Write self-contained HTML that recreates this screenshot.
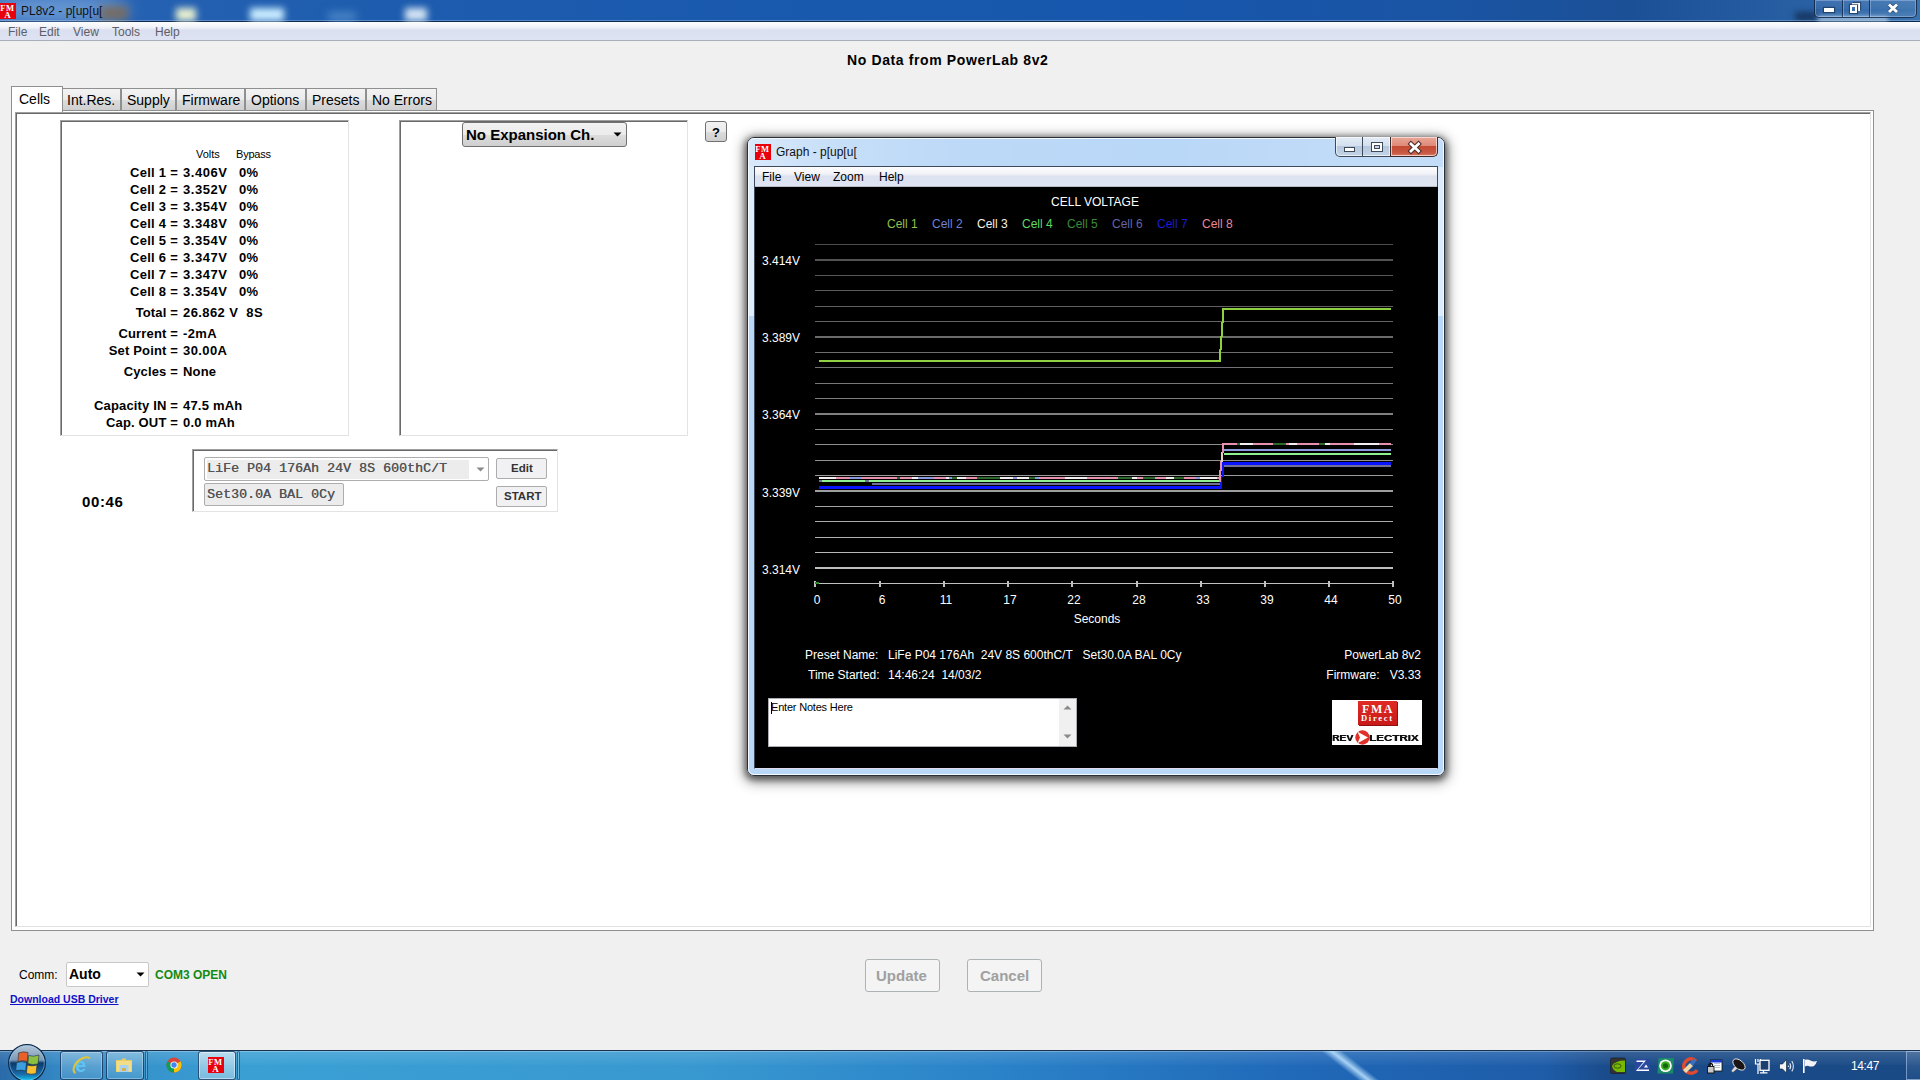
<!DOCTYPE html>
<html><head><meta charset="utf-8">
<style>
*{margin:0;padding:0;box-sizing:border-box}
html,body{width:1920px;height:1080px;overflow:hidden;background:#f0f0f0;font-family:"Liberation Sans",sans-serif;position:relative}
.a{position:absolute}
.t{position:absolute;white-space:pre;line-height:1}
#title{left:0;top:0;width:1920px;height:22px;background:linear-gradient(90deg,#2a64b4 0%,#1d5cae 20%,#1656ac 60%,#1a54a4 75%,#1b5096 85%,#2a62a6 95%,#3a72ae 100%);border-bottom:1px solid #0c2a52}
#menubar{left:0;top:22px;width:1920px;height:19px;background:linear-gradient(#fdfdfe 0%,#f0f2f9 30%,#dbe0f0 45%,#dde3f2 100%);border-bottom:1px solid #a9aeb9}
.menu{font-size:12px;color:#5e5e68}
.sunk{border-top:1px solid #a0a0a0;border-left:1px solid #a0a0a0;border-right:1px solid #e3e3e3;border-bottom:1px solid #e3e3e3;box-shadow:inset 1px 1px 0 #696969;background:#fff}
.cell{font-size:13px;font-weight:bold;color:#000}
.tab{height:22px;top:88px;border:1px solid #8e8f8f;border-bottom:none;background:linear-gradient(#f3f3f3,#ebebeb 50%,#dddddd 51%,#cfcfcf);font-size:14px;color:#000}
</style></head><body>

<!-- title bar -->
<div id="title" class="a"></div>
<div class="a" style="left:-20px;top:-6px;width:150px;height:30px;border-radius:50%;background:rgba(150,190,235,0.55);filter:blur(8px)"></div>
<div class="a" style="left:100px;top:6px;width:28px;height:14px;background:#7a6a58;filter:blur(4px);opacity:0.9"></div>
<div class="a" style="left:176px;top:8px;width:20px;height:13px;background:#e8f0d0;filter:blur(3.5px)"></div>
<div class="a" style="left:250px;top:8px;width:34px;height:13px;background:#c8ecff;filter:blur(3.5px)"></div>
<div class="a" style="left:328px;top:12px;width:28px;height:9px;background:#4a86c6;filter:blur(4px)"></div>
<div class="a" style="left:405px;top:8px;width:22px;height:13px;background:#d4e4f4;filter:blur(3.5px)"></div>
<div class="a" style="left:1795px;top:12px;width:22px;height:9px;background:rgba(10,20,40,0.55);filter:blur(3px)"></div>
<div class="a" style="left:1818px;top:17px;width:70px;height:4px;background:rgba(230,245,255,0.75);filter:blur(2px)"></div>
<div class="a" style="left:0;top:20px;width:1920px;height:1px;background:rgba(200,220,245,0.35)"></div>
<svg class="a" style="left:0;top:3px" width="16" height="16"><rect width="16" height="16" fill="#e8000c"/><text x="0.3" y="7.8" font-family="Liberation Serif" font-weight="bold" font-size="8.5" fill="#fff" letter-spacing="0.6">FM</text><text x="4.2" y="15.3" font-family="Liberation Serif" font-weight="bold" font-size="9" fill="#fff">A</text></svg>
<div class="t" style="left:21px;top:5px;font-size:12px;color:#111">PL8v2 - p[up[u[</div>
<div id="menubar" class="a"></div>
<div class="t menu" style="left:8px;top:26px">File</div>
<div class="t menu" style="left:39px;top:26px">Edit</div>
<div class="t menu" style="left:73px;top:26px">View</div>
<div class="t menu" style="left:112px;top:26px">Tools</div>
<div class="t menu" style="left:155px;top:26px">Help</div>

<div class="t" style="left:847px;top:53px;font-size:14px;font-weight:bold;color:#000;letter-spacing:0.62px">No Data from PowerLab 8v2</div>

<!-- tab page -->
<div class="a" style="left:11px;top:110px;width:1863px;height:821px;border:1px solid #8e8f8f;background:#fff"></div>
<div class="a sunk" style="left:15px;top:112px;width:1856px;height:815px"></div>

<div class="a tab" style="left:62px;width:59px"></div>
<div class="a tab" style="left:121px;width:55px"></div>
<div class="a tab" style="left:176px;width:69px"></div>
<div class="a tab" style="left:245px;width:61px"></div>
<div class="a tab" style="left:306px;width:60px"></div>
<div class="a tab" style="left:366px;width:71px"></div>
<div class="a" style="left:11px;top:86px;width:52px;height:26px;border:1px solid #8e8f8f;border-bottom:none;background:#fff"></div>
<div class="t" style="left:19px;top:92px;font-size:14px">Cells</div>
<div class="t" style="left:67px;top:93px;font-size:14px">Int.Res.</div>
<div class="t" style="left:127px;top:93px;font-size:14px">Supply</div>
<div class="t" style="left:182px;top:93px;font-size:14px">Firmware</div>
<div class="t" style="left:251px;top:93px;font-size:14px">Options</div>
<div class="t" style="left:312px;top:93px;font-size:14px">Presets</div>
<div class="t" style="left:372px;top:93px;font-size:14px">No Errors</div>

<!-- cells panel -->
<div class="a sunk" style="left:60px;top:120px;width:289px;height:316px"></div>
<div class="a sunk" style="left:399px;top:120px;width:289px;height:316px"></div>


<!-- cells text -->
<div class="t" style="left:196px;top:149px;font-size:11px;color:#000">Volts</div>
<div class="t" style="left:236px;top:149px;font-size:11px;color:#000;letter-spacing:-0.2px">Bypass</div>
<div class="t cell" style="right:1742px;top:166px;letter-spacing:0.25px">Cell 1 =</div>
<div class="t cell" style="left:183px;top:166px;letter-spacing:0.55px">3.406V</div>
<div class="t cell" style="left:239px;top:166px;letter-spacing:0.3px">0%</div>
<div class="t cell" style="right:1742px;top:183px;letter-spacing:0.25px">Cell 2 =</div>
<div class="t cell" style="left:183px;top:183px;letter-spacing:0.55px">3.352V</div>
<div class="t cell" style="left:239px;top:183px;letter-spacing:0.3px">0%</div>
<div class="t cell" style="right:1742px;top:200px;letter-spacing:0.25px">Cell 3 =</div>
<div class="t cell" style="left:183px;top:200px;letter-spacing:0.55px">3.354V</div>
<div class="t cell" style="left:239px;top:200px;letter-spacing:0.3px">0%</div>
<div class="t cell" style="right:1742px;top:217px;letter-spacing:0.25px">Cell 4 =</div>
<div class="t cell" style="left:183px;top:217px;letter-spacing:0.55px">3.348V</div>
<div class="t cell" style="left:239px;top:217px;letter-spacing:0.3px">0%</div>
<div class="t cell" style="right:1742px;top:234px;letter-spacing:0.25px">Cell 5 =</div>
<div class="t cell" style="left:183px;top:234px;letter-spacing:0.55px">3.354V</div>
<div class="t cell" style="left:239px;top:234px;letter-spacing:0.3px">0%</div>
<div class="t cell" style="right:1742px;top:251px;letter-spacing:0.25px">Cell 6 =</div>
<div class="t cell" style="left:183px;top:251px;letter-spacing:0.55px">3.347V</div>
<div class="t cell" style="left:239px;top:251px;letter-spacing:0.3px">0%</div>
<div class="t cell" style="right:1742px;top:268px;letter-spacing:0.25px">Cell 7 =</div>
<div class="t cell" style="left:183px;top:268px;letter-spacing:0.55px">3.347V</div>
<div class="t cell" style="left:239px;top:268px;letter-spacing:0.3px">0%</div>
<div class="t cell" style="right:1742px;top:285px;letter-spacing:0.25px">Cell 8 =</div>
<div class="t cell" style="left:183px;top:285px;letter-spacing:0.55px">3.354V</div>
<div class="t cell" style="left:239px;top:285px;letter-spacing:0.3px">0%</div>
<div class="t cell" style="right:1742px;top:306px;letter-spacing:0.15px">Total =</div>
<div class="t cell" style="left:183px;top:306px;letter-spacing:0.4px">26.862 V  8S</div>
<div class="t cell" style="right:1742px;top:327px;letter-spacing:0.15px">Current =</div>
<div class="t cell" style="left:183px;top:327px;letter-spacing:0.4px">-2mA</div>
<div class="t cell" style="right:1742px;top:344px;letter-spacing:0.15px">Set Point =</div>
<div class="t cell" style="left:183px;top:344px;letter-spacing:0.4px">30.00A</div>
<div class="t cell" style="right:1742px;top:365px;letter-spacing:0.15px">Cycles =</div>
<div class="t cell" style="left:183px;top:365px;letter-spacing:0.2px">None</div>
<div class="t cell" style="right:1742px;top:399px;letter-spacing:0.15px">Capacity IN =</div>
<div class="t cell" style="left:183px;top:399px;letter-spacing:0.2px">47.5 mAh</div>
<div class="t cell" style="right:1742px;top:416px;letter-spacing:0.15px">Cap. OUT =</div>
<div class="t cell" style="left:183px;top:416px;letter-spacing:0.2px">0.0 mAh</div>
<!-- expansion combo -->
<div class="a" style="left:462px;top:122px;width:165px;height:25px;border:1px solid #707070;border-radius:3px;background:linear-gradient(#f2f2f2 0%,#ebebeb 50%,#dddddd 51%,#cfcfcf 100%)"></div>
<div class="t" style="left:466px;top:127px;font-size:15px;font-weight:bold;color:#000">No Expansion Ch.</div>
<svg class="a" style="left:613px;top:132px" width="9" height="6"><path d="M0.5 0.5 H8.5 L4.5 4.5 Z" fill="#000"/></svg>
<!-- ? button -->
<div class="a" style="left:705px;top:121px;width:22px;height:21px;border:1px solid #707070;border-radius:3px;background:linear-gradient(#f2f2f2 0%,#ebebeb 50%,#dddddd 51%,#cfcfcf 100%)"></div>
<div class="t" style="left:712px;top:126px;font-size:13px;font-weight:bold;color:#000">?</div>
<!-- preset group -->
<div class="a" style="left:192px;top:449px;width:366px;height:63px;border-top:1px solid #a0a0a0;border-left:1px solid #a0a0a0;border-right:1px solid #e3e3e3;border-bottom:1px solid #e3e3e3;box-shadow:inset 1px 1px 0 #696969;background:#fff"></div>
<div class="a" style="left:204px;top:457px;width:285px;height:24px;border:1px solid #adadad;border-radius:2px;background:#fff"></div>
<div class="a" style="left:207px;top:460px;width:262px;height:19px;background:#ececec"></div>
<div class="t" style="left:207px;top:462px;font-family:'Liberation Mono',monospace;font-size:13.33px;font-weight:normal;color:#555;text-shadow:0.35px 0 0 #555">LiFe P04 176Ah 24V 8S 600thC/T</div>
<svg class="a" style="left:476px;top:467px" width="9" height="6"><path d="M0.5 0.5 H8.5 L4.5 4.5 Z" fill="#8a8a8a"/></svg>
<div class="a" style="left:204px;top:483px;width:140px;height:23px;border:1px solid #adadad;border-radius:2px;background:#ececec"></div>
<div class="t" style="left:207px;top:488px;font-family:'Liberation Mono',monospace;font-size:13.33px;font-weight:normal;color:#555;text-shadow:0.35px 0 0 #555">Set30.0A BAL 0Cy</div>
<div class="a" style="left:496px;top:458px;width:51px;height:21px;border:1px solid #adadad;border-radius:2px;background:#f1f1f3"></div>
<div class="t" style="left:511px;top:463px;font-size:11.5px;font-weight:bold;color:#333">Edit</div>
<div class="a" style="left:496px;top:486px;width:51px;height:21px;border:1px solid #adadad;border-radius:2px;background:#f1f1f3"></div>
<div class="t" style="left:504px;top:491px;font-size:11.5px;font-weight:bold;color:#333">START</div>
<div class="t" style="left:82px;top:494px;font-size:15px;font-weight:bold;color:#000;letter-spacing:0.6px">00:46</div>
<!-- graph window shadow & frame -->
<div class="a" style="left:747px;top:137px;width:698px;height:639px;border-radius:7px;box-shadow:0 3px 14px 3px rgba(0,0,0,0.4),0 2px 6px 2px rgba(0,0,0,0.5)"></div>
<div class="a" style="left:747px;top:137px;width:698px;height:639px;border-radius:7px;border:1px solid #2a3038;background:#b9d7f7"></div>
<div class="a" style="left:748px;top:138px;width:696px;height:637px;border-radius:6px;border:1px solid rgba(255,255,255,0.85)"></div>
<div class="a" style="left:749px;top:139px;width:694px;height:28px;border-radius:5px 5px 0 0;background:linear-gradient(90deg,rgba(255,255,255,0.45) 0%,rgba(255,255,255,0.2) 12%,rgba(255,255,255,0.05) 30%,rgba(255,255,255,0) 60%,rgba(255,255,255,0.15) 95%)"></div>
<div class="a" style="left:749px;top:167px;width:5px;height:149px;background:rgba(255,255,255,0.55)"></div>
<div class="a" style="left:1438px;top:167px;width:5px;height:149px;background:rgba(255,255,255,0.5)"></div>
<svg class="a" style="left:755px;top:144px" width="16" height="16"><rect width="16" height="16" fill="#e8000c"/><text x="0.3" y="7.8" font-family="Liberation Serif" font-weight="bold" font-size="8.5" fill="#fff" letter-spacing="0.6">FM</text><text x="4.2" y="15.3" font-family="Liberation Serif" font-weight="bold" font-size="9" fill="#fff">A</text></svg>
<div class="t" style="left:776px;top:146px;font-size:12px;color:#111">Graph - p[up[u[</div>
<!-- title buttons -->
<div class="a" style="left:1335px;top:137px;width:56px;height:20px;border:1px solid #3c4a5c;border-top:none;border-radius:0 0 0 5px;box-shadow:inset 0 0 0 1px rgba(255,255,255,0.6);background:linear-gradient(#e4ecf6 0%,#d4e0ee 45%,#b6c8de 50%,#c4d4e6 100%)"></div>
<div class="a" style="left:1362px;top:137px;width:1px;height:19px;background:#3c4a5c"></div>
<div class="a" style="left:1390px;top:137px;width:48px;height:20px;border:1px solid #3a2a2a;border-top:none;border-radius:0 0 5px 0;box-shadow:inset 0 0 0 1px rgba(255,235,230,0.7);background:linear-gradient(#e8a898 0%,#e08a7a 45%,#c44a34 50%,#c85a44 85%,#d88070 100%)"></div>
<div class="a" style="left:1344px;top:147px;width:11px;height:5px;border:1px solid #3c4a5c;background:#fff"></div>
<div class="a" style="left:1371px;top:142px;width:12px;height:10px;border:1px solid #3c4a5c;background:#fff"></div>
<div class="a" style="left:1374px;top:145px;width:6px;height:4px;border:1px solid #3c4a5c;background:#c8d4e4"></div>
<svg class="a" style="left:1406px;top:139px" width="17" height="16"><path d="M5 5 L12.5 12 M12.5 5 L5 12" stroke="#4a2a28" stroke-width="4.8" stroke-linecap="square"/><path d="M5 5 L12.5 12 M12.5 5 L5 12" stroke="#fff" stroke-width="2.8" stroke-linecap="square"/></svg>
<!-- client edge + menubar -->
<div class="a" style="left:754px;top:166px;width:684px;height:603px;border:1px solid #3c4a5c;border-bottom-color:#dde"></div>
<div class="a" style="left:755px;top:167px;width:682px;height:20px;background:linear-gradient(#fdfdfe 0%,#f2f3f8 35%,#dde2f0 50%,#dfe4f2 100%);border-bottom:1px solid #b9bcc6"></div>
<div class="t" style="left:762px;top:171px;font-size:12px;color:#000">File</div>
<div class="t" style="left:794px;top:171px;font-size:12px;color:#000">View</div>
<div class="t" style="left:833px;top:171px;font-size:12px;color:#000">Zoom</div>
<div class="t" style="left:879px;top:171px;font-size:12px;color:#000">Help</div>
<svg class="a" style="left:755px;top:187px" width="683" height="581" viewBox="755 187 683 581" shape-rendering="crispEdges">
<defs><linearGradient id="gg" gradientUnits="userSpaceOnUse" x1="0" y1="240" x2="0" y2="585"><stop offset="0" stop-color="#4c4c4c"/><stop offset="0.5" stop-color="#808080"/><stop offset="1" stop-color="#c4c4c4"/></linearGradient></defs>
<rect x="755" y="187" width="683" height="581" fill="#000"/>
<rect x="815" y="244" width="578" height="1" fill="url(#gg)"/>
<rect x="815" y="275" width="578" height="1" fill="url(#gg)"/>
<rect x="815" y="290" width="578" height="1" fill="url(#gg)"/>
<rect x="815" y="306" width="578" height="1" fill="url(#gg)"/>
<rect x="815" y="321" width="578" height="1" fill="url(#gg)"/>
<rect x="815" y="352" width="578" height="1" fill="url(#gg)"/>
<rect x="815" y="367" width="578" height="1" fill="url(#gg)"/>
<rect x="815" y="383" width="578" height="1" fill="url(#gg)"/>
<rect x="815" y="398" width="578" height="1" fill="url(#gg)"/>
<rect x="815" y="429" width="578" height="1" fill="url(#gg)"/>
<rect x="815" y="444" width="578" height="1" fill="url(#gg)"/>
<rect x="815" y="460" width="578" height="1" fill="url(#gg)"/>
<rect x="815" y="475" width="578" height="1" fill="url(#gg)"/>
<rect x="815" y="506" width="578" height="1" fill="url(#gg)"/>
<rect x="815" y="521" width="578" height="1" fill="url(#gg)"/>
<rect x="815" y="537" width="578" height="1" fill="url(#gg)"/>
<rect x="815" y="552" width="578" height="1" fill="url(#gg)"/>
<rect x="815" y="259" width="578" height="2" fill="url(#gg)"/>
<rect x="815" y="336" width="578" height="2" fill="url(#gg)"/>
<rect x="815" y="413" width="578" height="2" fill="url(#gg)"/>
<rect x="815" y="490" width="578" height="2" fill="url(#gg)"/>
<rect x="815" y="567" width="578" height="2" fill="url(#gg)"/>
<rect x="815" y="583" width="579" height="1" fill="#c0c0c0"/>
<rect x="814" y="581" width="2" height="6" fill="#c0c0c0"/>
<rect x="879" y="581" width="2" height="6" fill="#c0c0c0"/>
<rect x="943" y="581" width="2" height="6" fill="#c0c0c0"/>
<rect x="1007" y="581" width="2" height="6" fill="#c0c0c0"/>
<rect x="1071" y="581" width="2" height="6" fill="#c0c0c0"/>
<rect x="1136" y="581" width="2" height="6" fill="#c0c0c0"/>
<rect x="1200" y="581" width="2" height="6" fill="#c0c0c0"/>
<rect x="1264" y="581" width="2" height="6" fill="#c0c0c0"/>
<rect x="1328" y="581" width="2" height="6" fill="#c0c0c0"/>
<rect x="1392" y="581" width="2" height="6" fill="#c0c0c0"/>
<rect x="815" y="582" width="4" height="2" fill="#2a8a2a"/>
<text x="762" y="265" fill="#fff" font-size="12" font-family="Liberation Sans" shape-rendering="auto">3.414V</text>
<text x="762" y="342" fill="#fff" font-size="12" font-family="Liberation Sans" shape-rendering="auto">3.389V</text>
<text x="762" y="419" fill="#fff" font-size="12" font-family="Liberation Sans" shape-rendering="auto">3.364V</text>
<text x="762" y="497" fill="#fff" font-size="12" font-family="Liberation Sans" shape-rendering="auto">3.339V</text>
<text x="762" y="574" fill="#fff" font-size="12" font-family="Liberation Sans" shape-rendering="auto">3.314V</text>
<text x="817" y="604" fill="#fff" font-size="12" font-family="Liberation Sans" text-anchor="middle">0</text>
<text x="882" y="604" fill="#fff" font-size="12" font-family="Liberation Sans" text-anchor="middle">6</text>
<text x="946" y="604" fill="#fff" font-size="12" font-family="Liberation Sans" text-anchor="middle">11</text>
<text x="1010" y="604" fill="#fff" font-size="12" font-family="Liberation Sans" text-anchor="middle">17</text>
<text x="1074" y="604" fill="#fff" font-size="12" font-family="Liberation Sans" text-anchor="middle">22</text>
<text x="1139" y="604" fill="#fff" font-size="12" font-family="Liberation Sans" text-anchor="middle">28</text>
<text x="1203" y="604" fill="#fff" font-size="12" font-family="Liberation Sans" text-anchor="middle">33</text>
<text x="1267" y="604" fill="#fff" font-size="12" font-family="Liberation Sans" text-anchor="middle">39</text>
<text x="1331" y="604" fill="#fff" font-size="12" font-family="Liberation Sans" text-anchor="middle">44</text>
<text x="1395" y="604" fill="#fff" font-size="12" font-family="Liberation Sans" text-anchor="middle">50</text>
<text x="1097" y="623" fill="#fff" font-size="12" font-family="Liberation Sans" text-anchor="middle">Seconds</text>
<text x="1095" y="206" fill="#fff" font-size="12" font-family="Liberation Sans" text-anchor="middle">CELL VOLTAGE</text>
<text x="887" y="228" fill="#90c050" font-size="12" font-family="Liberation Sans">Cell 1</text>
<text x="932" y="228" fill="#7080d8" font-size="12" font-family="Liberation Sans">Cell 2</text>
<text x="977" y="228" fill="#f4f0e8" font-size="12" font-family="Liberation Sans">Cell 3</text>
<text x="1022" y="228" fill="#60d860" font-size="12" font-family="Liberation Sans">Cell 4</text>
<text x="1067" y="228" fill="#3a8a3a" font-size="12" font-family="Liberation Sans">Cell 5</text>
<text x="1112" y="228" fill="#6464a8" font-size="12" font-family="Liberation Sans">Cell 6</text>
<text x="1157" y="228" fill="#1c1cd0" font-size="12" font-family="Liberation Sans">Cell 7</text>
<text x="1202" y="228" fill="#e88898" font-size="12" font-family="Liberation Sans">Cell 8</text>
<rect x="819" y="360" width="402" height="2" fill="#8fd040"/>
<rect x="1219" y="349" width="2" height="13" fill="#8fd040"/>
<rect x="1220" y="336" width="2" height="14" fill="#8fd040"/>
<rect x="1221" y="322" width="2" height="15" fill="#8fd040"/>
<rect x="1222" y="308" width="2" height="15" fill="#8fd040"/>
<rect x="1223" y="308" width="168" height="2" fill="#8fd040"/>
<rect x="819" y="477" width="8" height="2" fill="#f4f0f0"/>
<rect x="827" y="477" width="9" height="2" fill="#f4f0f0"/>
<rect x="836" y="477" width="3" height="2" fill="#e890b0"/>
<rect x="839" y="477" width="11" height="2" fill="#e890b0"/>
<rect x="850" y="477" width="8" height="2" fill="#8c9ae0"/>
<rect x="858" y="477" width="3" height="2" fill="#8c9ae0"/>
<rect x="861" y="477" width="6" height="2" fill="#e890b0"/>
<rect x="867" y="477" width="4" height="2" fill="#e890b0"/>
<rect x="871" y="477" width="9" height="2" fill="#e890b0"/>
<rect x="880" y="477" width="6" height="2" fill="#e890b0"/>
<rect x="886" y="477" width="11" height="2" fill="#e890b0"/>
<rect x="897" y="477" width="3" height="2" fill="#2a6a2a"/>
<rect x="900" y="477" width="12" height="2" fill="#e890b0"/>
<rect x="912" y="477" width="6" height="2" fill="#f4f0f0"/>
<rect x="918" y="477" width="13" height="2" fill="#8c9ae0"/>
<rect x="931" y="477" width="3" height="2" fill="#8c9ae0"/>
<rect x="934" y="477" width="12" height="2" fill="#e890b0"/>
<rect x="946" y="477" width="3" height="2" fill="#f4f0f0"/>
<rect x="949" y="477" width="3" height="2" fill="#8c9ae0"/>
<rect x="952" y="477" width="5" height="2" fill="#2a6a2a"/>
<rect x="957" y="477" width="9" height="2" fill="#f4f0f0"/>
<rect x="966" y="477" width="11" height="2" fill="#e890b0"/>
<rect x="977" y="477" width="12" height="2" fill="#2a6a2a"/>
<rect x="989" y="477" width="11" height="2" fill="#2a6a2a"/>
<rect x="1000" y="477" width="13" height="2" fill="#f4f0f0"/>
<rect x="1013" y="477" width="4" height="2" fill="#8c9ae0"/>
<rect x="1017" y="477" width="12" height="2" fill="#f4f0f0"/>
<rect x="1029" y="477" width="6" height="2" fill="#2a6a2a"/>
<rect x="1035" y="477" width="4" height="2" fill="#8c9ae0"/>
<rect x="1039" y="477" width="14" height="2" fill="#e890b0"/>
<rect x="1053" y="477" width="12" height="2" fill="#e890b0"/>
<rect x="1065" y="477" width="12" height="2" fill="#f4f0f0"/>
<rect x="1077" y="477" width="10" height="2" fill="#f4f0f0"/>
<rect x="1087" y="477" width="11" height="2" fill="#e890b0"/>
<rect x="1098" y="477" width="8" height="2" fill="#e890b0"/>
<rect x="1106" y="477" width="12" height="2" fill="#e890b0"/>
<rect x="1118" y="477" width="8" height="2" fill="#2a6a2a"/>
<rect x="1126" y="477" width="6" height="2" fill="#2a6a2a"/>
<rect x="1132" y="477" width="5" height="2" fill="#f4f0f0"/>
<rect x="1137" y="477" width="6" height="2" fill="#e890b0"/>
<rect x="1143" y="477" width="12" height="2" fill="#2a6a2a"/>
<rect x="1155" y="477" width="11" height="2" fill="#e890b0"/>
<rect x="1166" y="477" width="8" height="2" fill="#f4f0f0"/>
<rect x="1174" y="477" width="10" height="2" fill="#2a6a2a"/>
<rect x="1184" y="477" width="12" height="2" fill="#e890b0"/>
<rect x="1196" y="477" width="4" height="2" fill="#8c9ae0"/>
<rect x="1200" y="477" width="9" height="2" fill="#f4f0f0"/>
<rect x="1209" y="477" width="8" height="2" fill="#f4f0f0"/>
<rect x="1217" y="477" width="3" height="2" fill="#e890b0"/>
<rect x="819" y="480" width="402" height="2" fill="#8ef08e"/>
<rect x="819" y="480" width="3" height="2" fill="#707098"/>
<rect x="822" y="480" width="11" height="2" fill="#8ef08e"/>
<rect x="833" y="480" width="8" height="2" fill="#8ef08e"/>
<rect x="841" y="480" width="12" height="2" fill="#8ef08e"/>
<rect x="853" y="480" width="12" height="2" fill="#8ef08e"/>
<rect x="865" y="480" width="4" height="2" fill="#707098"/>
<rect x="869" y="480" width="3" height="2" fill="#8ef08e"/>
<rect x="872" y="483" width="348" height="2" fill="#707098"/>
<rect x="819" y="486" width="403" height="3" fill="#0a14ff"/>
<rect x="1220" y="476" width="2" height="13" fill="#0a14ff"/>
<rect x="1222" y="462" width="2" height="15" fill="#0a14ff"/>
<rect x="1219" y="470" width="2" height="12" fill="#e890b0"/>
<rect x="1220" y="461" width="2" height="10" fill="#e890b0"/>
<rect x="1221" y="452" width="2" height="10" fill="#e8d0c0"/>
<rect x="1222" y="443" width="2" height="10" fill="#e890b0"/>
<rect x="1223" y="443" width="14" height="2" fill="#e890b0"/>
<rect x="1237" y="443" width="3" height="2" fill="#2a6a2a"/>
<rect x="1240" y="443" width="13" height="2" fill="#f4f0f0"/>
<rect x="1253" y="443" width="13" height="2" fill="#e890b0"/>
<rect x="1266" y="443" width="7" height="2" fill="#e890b0"/>
<rect x="1273" y="443" width="13" height="2" fill="#2a6a2a"/>
<rect x="1286" y="443" width="3" height="2" fill="#e890b0"/>
<rect x="1289" y="443" width="8" height="2" fill="#f4f0f0"/>
<rect x="1297" y="443" width="12" height="2" fill="#e890b0"/>
<rect x="1309" y="443" width="10" height="2" fill="#e890b0"/>
<rect x="1319" y="443" width="6" height="2" fill="#2a6a2a"/>
<rect x="1325" y="443" width="5" height="2" fill="#f4f0f0"/>
<rect x="1330" y="443" width="9" height="2" fill="#e890b0"/>
<rect x="1339" y="443" width="10" height="2" fill="#e890b0"/>
<rect x="1349" y="443" width="5" height="2" fill="#e890b0"/>
<rect x="1354" y="443" width="9" height="2" fill="#f4f0f0"/>
<rect x="1363" y="443" width="7" height="2" fill="#f4f0f0"/>
<rect x="1370" y="443" width="9" height="2" fill="#f4f0f0"/>
<rect x="1379" y="443" width="7" height="2" fill="#e890b0"/>
<rect x="1386" y="443" width="5" height="2" fill="#e890b0"/>
<rect x="1224" y="449" width="167" height="2" fill="#8c9ae0"/>
<rect x="1224" y="453" width="167" height="2" fill="#8ef08e"/>
<rect x="1223" y="462" width="168" height="3" fill="#0a14ff"/>
<rect x="1224" y="465" width="167" height="2" fill="#707098"/>
<text x="805" y="659" fill="#fff" font-size="12" font-family="Liberation Sans" xml:space="preserve">Preset Name:</text>
<text x="888" y="659" fill="#fff" font-size="12" font-family="Liberation Sans" xml:space="preserve">LiFe P04 176Ah  24V 8S 600thC/T   Set30.0A BAL 0Cy</text>
<text x="808" y="679" fill="#fff" font-size="12" font-family="Liberation Sans" xml:space="preserve">Time Started:</text>
<text x="888" y="679" fill="#fff" font-size="12" font-family="Liberation Sans" xml:space="preserve">14:46:24  14/03/2</text>
<text x="1421" y="659" fill="#fff" font-size="12" font-family="Liberation Sans" text-anchor="end">PowerLab 8v2</text>
<text x="1421" y="679" fill="#fff" font-size="12" font-family="Liberation Sans" text-anchor="end" xml:space="preserve">Firmware:   V3.33</text>
</svg>
<!-- notes -->
<div class="a" style="left:768px;top:698px;width:309px;height:49px;background:#fff;border:1px solid #abadb3"></div>
<div class="a" style="left:1059px;top:699px;width:17px;height:47px;background:#f0f0f0"></div>
<svg class="a" style="left:1063px;top:705px" width="9" height="6"><path d="M0.5 4.5 H8.5 L4.5 0.5 Z" fill="#8a8a8a"/></svg>
<svg class="a" style="left:1063px;top:734px" width="9" height="6"><path d="M0.5 0.5 H8.5 L4.5 4.5 Z" fill="#8a8a8a"/></svg>
<div class="t" style="left:771px;top:702px;font-size:11px;color:#000;letter-spacing:-0.2px">Enter Notes Here</div>
<div class="a" style="left:771px;top:702px;width:1px;height:12px;background:#000"></div>
<!-- logo -->
<div class="a" style="left:1332px;top:700px;width:90px;height:45px;background:#fff"></div>
<div class="a" style="left:1358px;top:701px;width:39px;height:24px;background:linear-gradient(#e02a24,#c81a18);box-shadow:1px 1px 0 #901010"></div>
<div class="t" style="left:1362px;top:703px;font-family:'Liberation Serif',serif;font-weight:bold;font-size:12px;color:#fff;letter-spacing:1.6px">FMA</div>
<div class="t" style="left:1361px;top:714px;font-family:'Liberation Serif',serif;font-weight:bold;font-size:8.5px;color:#fff;letter-spacing:1.7px">Direct</div>
<div class="t" style="left:1332px;top:734px;font-size:8.5px;font-weight:bold;color:#111;text-shadow:0.4px 0 0 #111;transform:scaleX(1.2);transform-origin:0 0">REV</div>
<svg class="a" style="left:1355px;top:730px" width="15" height="15"><circle cx="7.5" cy="7.5" r="7.2" fill="#e03028"/><path d="M2.5 1.8 L13 7.5 L2.5 13.2 L5 7.5 Z" fill="#fff"/></svg>
<div class="t" style="left:1369px;top:734px;font-size:8.5px;font-weight:bold;color:#111;text-shadow:0.4px 0 0 #111;transform:scaleX(1.36);transform-origin:0 0">LECTRIX</div>
<div class="t" style="left:19px;top:969px;font-size:12px;color:#000">Comm:</div>
<div class="a" style="left:66px;top:962px;width:83px;height:25px;background:#fff;border:1px solid #c8c8c8;border-radius:2px"></div>
<div class="t" style="left:69px;top:967px;font-size:14px;font-weight:bold;color:#000">Auto</div>
<svg class="a" style="left:136px;top:972px" width="9" height="6"><path d="M0.5 0.5 H8.5 L4.5 4.5 Z" fill="#000"/></svg>
<div class="t" style="left:155px;top:969px;font-size:12px;font-weight:bold;color:#138a13">COM3 OPEN</div>
<div class="t" style="left:10px;top:994px;font-size:10.5px;font-weight:bold;color:#1010c8;text-decoration:underline">Download USB Driver</div>
<div class="a" style="left:865px;top:959px;width:75px;height:33px;border:1px solid #adb2b5;border-radius:3px;background:#f4f4f4"></div>
<div class="t" style="left:876px;top:968px;font-size:15px;font-weight:bold;color:#a0a0a0">Update</div>
<div class="a" style="left:967px;top:959px;width:75px;height:33px;border:1px solid #adb2b5;border-radius:3px;background:#f4f4f4"></div>
<div class="t" style="left:980px;top:968px;font-size:15px;font-weight:bold;color:#a0a0a0">Cancel</div>
<div class="a" style="left:0;top:1050px;width:1920px;height:30px;background:linear-gradient(90deg,#2a6aa8 0%,#3388c4 3%,#3aa0d4 13%,#3898d0 36%,#2a82c8 52%,#2068b8 68%,#1e5ca8 80.5%,#1a4a88 84%,#1a4a86 100%);border-top:1px solid #16324e"></div>
<div class="a" style="left:0;top:1051px;width:1920px;height:1px;background:rgba(255,255,255,0.35)"></div>
<div class="a" style="left:0;top:1052px;width:1920px;height:13px;background:linear-gradient(rgba(255,255,255,0.12),rgba(255,255,255,0.02))"></div>
<div class="a" style="left:1339px;top:1051px;width:22px;height:29px;background:linear-gradient(90deg,rgba(180,220,255,0),rgba(190,228,255,0.85) 50%,rgba(180,220,255,0));transform:skewX(52deg)"></div>
<!-- start orb -->
<svg class="a" style="left:6px;top:1043px" width="42" height="37" viewBox="6 1043 42 37">
<defs>
<linearGradient id="orbg" x1="0" y1="0" x2="0" y2="1"><stop offset="0" stop-color="#b8c8d8"/><stop offset="0.42" stop-color="#7a9ab8"/><stop offset="0.5" stop-color="#0a3a6a"/><stop offset="0.8" stop-color="#1a6aa8"/><stop offset="1" stop-color="#10d0f8"/></linearGradient>
</defs>
<circle cx="27" cy="1063" r="18.4" fill="url(#orbg)" stroke="#0e2a48" stroke-width="1.2"/>
<circle cx="27" cy="1063" r="17.3" fill="none" stroke="rgba(160,210,255,0.55)" stroke-width="0.9"/>
<path d="M18.5 1053 Q23 1051 28 1052.5 L27.3 1061.5 Q22.5 1059.8 18 1061.5 Z" fill="#e8602a" stroke="#203040" stroke-width="0.6"/>
<path d="M28.6 1055.5 Q33 1057.2 39 1055 L38 1064 Q32.5 1065.5 27.8 1063.5 Z" fill="#8cc040" stroke="#203040" stroke-width="0.6"/>
<path d="M16.5 1062.5 Q21.5 1060.8 26.5 1062.6 L25.6 1071 Q20.5 1069.3 15.8 1070.8 Z" fill="#3a9ee0" stroke="#203040" stroke-width="0.6"/>
<path d="M27.3 1065 Q31.5 1066.7 37 1065 L36 1073.6 Q31 1075 26.4 1073.3 Z" fill="#f8c030" stroke="#203040" stroke-width="0.6"/>
</svg>
<!-- buttons -->
<div class="a" style="left:60px;top:1051px;width:43px;height:29px;border:1px solid rgba(10,40,80,0.75);border-radius:3px;box-shadow:inset 0 0 0 1px rgba(255,255,255,0.3);background:linear-gradient(rgba(255,255,255,0.3),rgba(255,255,255,0.08))"></div>
<svg class="a" style="left:70px;top:1054px" width="24" height="22"><text x="5" y="18.3" font-size="20" font-weight="bold" font-family="Liberation Sans" fill="#5ec4f4">e</text><path d="M20 4.5 Q18 2 12 4.5 Q6 7.5 4 13 Q2.5 17.5 5.5 19" fill="none" stroke="#e0c438" stroke-width="2"/></svg>
<div class="a" style="left:106px;top:1051px;width:38px;height:29px;border:1px solid rgba(10,40,80,0.75);border-radius:3px;box-shadow:inset 0 0 0 1px rgba(255,255,255,0.3);background:linear-gradient(rgba(255,255,255,0.3),rgba(255,255,255,0.08))"></div>
<svg class="a" style="left:115px;top:1057px" width="18" height="16"><path d="M1 3 H6 L7.5 1.5 H11 V3 H17 V15 H1 Z" fill="#e8cc60"/><rect x="1.5" y="4" width="15" height="10.5" fill="#f2dc88"/><rect x="4.5" y="8" width="9" height="7" fill="#a8d4f0"/><rect x="7" y="11" width="4" height="3" fill="#d8b050"/></svg>
<div class="a" style="left:145px;top:1051px;width:3px;height:29px;border:1px solid rgba(10,40,80,0.6);border-radius:2px;background:rgba(255,255,255,0.2)"></div>
<svg class="a" style="left:166px;top:1057px" width="16" height="16"><circle cx="8" cy="8" r="7.5" fill="#db4437"/><path d="M8 8 L14.5 4.2 A7.5 7.5 0 0 1 8 15.5 Z" fill="#f4c20d"/><path d="M8 8 L8 15.5 A7.5 7.5 0 0 1 1.5 4.2 Z" fill="#0f9d58"/><circle cx="8" cy="8" r="3.6" fill="#fff"/><circle cx="8" cy="8" r="2.7" fill="#4285f4"/></svg>
<div class="a" style="left:198px;top:1051px;width:38px;height:29px;border:1px solid rgba(10,40,80,0.75);border-radius:3px;box-shadow:inset 0 0 0 1px rgba(255,255,255,0.45);background:linear-gradient(rgba(255,255,255,0.6),rgba(255,255,255,0.32))"></div>
<svg class="a" style="left:208px;top:1057px" width="16" height="16"><rect width="16" height="16" fill="#e8000c"/><text x="0.3" y="7.8" font-family="Liberation Serif" font-weight="bold" font-size="8.5" fill="#fff" letter-spacing="0.6">FM</text><text x="4.2" y="15.3" font-family="Liberation Serif" font-weight="bold" font-size="9" fill="#fff">A</text></svg>
<div class="a" style="left:237px;top:1051px;width:3px;height:29px;border:1px solid rgba(10,40,80,0.6);border-radius:2px;background:rgba(255,255,255,0.25)"></div>
<!-- tray -->
<svg class="a" style="left:1605px;top:1052px" width="220" height="26" viewBox="1605 1052 220 26">
<rect x="1610.5" y="1058" width="15" height="15.5" rx="1.5" fill="#333" stroke="#1a2230" stroke-width="0.8"/>
<path d="M1612 1066 Q1615 1060.5 1625 1060.5 V1072 H1617 Q1613 1070.5 1612 1066 Z" fill="#76b900"/>
<ellipse cx="1617.5" cy="1066" rx="3.6" ry="2.2" fill="none" stroke="#3a5a10" stroke-width="1"/>
<rect x="1635" y="1059" width="15" height="12.5" fill="#2a48a0"/>
<path d="M1636.5 1060.5 H1646 L1638 1069.5 H1649 V1071 H1636 L1643.5 1062 H1636.5 Z" fill="#fff"/>
<path d="M1644 1067.5 L1646 1064.5 L1648 1067.5 Z" fill="#fff"/>
<rect x="1658" y="1058" width="15.5" height="15.5" fill="#1a8a68" transform="skewX(-4)" transform-origin="1665 1066"/>
<circle cx="1665.5" cy="1065.8" r="6.3" fill="#fff"/>
<circle cx="1665.5" cy="1065.8" r="4.6" fill="#38b020"/>
<circle cx="1665.5" cy="1065.8" r="2.6" fill="#1a6a10"/>
<circle cx="1665.5" cy="1065.8" r="1.1" fill="#062"/>
<path d="M1696 1061 Q1692 1057.5 1688 1059.5 Q1682.5 1063 1684 1069 Q1687 1074 1693 1073 Q1696 1072 1697 1070" fill="none" stroke="#e04a30" stroke-width="3.4"/>
<path d="M1683 1070 L1690 1063 L1693 1066 L1686 1073 Z" fill="#f0d8a8"/>
<path d="M1690 1063 L1694 1058.5 L1696 1061 L1693 1066 Z" fill="#3a70c0"/>
<rect x="1710.5" y="1060" width="11.5" height="11" fill="#fff" stroke="#111" stroke-width="0.8"/>
<rect x="1710.5" y="1060" width="11.5" height="2.5" fill="#1a3ad8"/>
<path d="M1714 1063.5 H1720 M1714 1065.5 H1720 M1715 1067.5 H1720" stroke="#9ab" stroke-width="0.7"/>
<rect x="1707.5" y="1066.5" width="6.5" height="6.5" fill="#c8c8c8" stroke="#111" stroke-width="0.9"/>
<path d="M1709 1066.5 V1064.5 Q1710.8 1062.5 1712.5 1064.5 V1066.5" fill="none" stroke="#111" stroke-width="1.3"/>
<ellipse cx="1739" cy="1064.5" rx="7.2" ry="4.2" transform="rotate(40 1739 1064.5)" fill="#1a1414" stroke="#e8e8f0" stroke-width="0.9"/>
<path d="M1731 1071 L1735 1066 L1737.5 1068.5 L1733 1072.5 Z" fill="#ddd" stroke="#333" stroke-width="0.5"/>
<path d="M1755.5 1059 V1064 H1760.5 V1059 M1758 1059 V1062 M1758 1064 V1074" fill="none" stroke="#fff" stroke-width="1.2"/>
<rect x="1760" y="1060.3" width="9" height="10" fill="#1c3e70" stroke="#fff" stroke-width="1.3"/>
<path d="M1760 1072.8 H1767.5 M1763.5 1070.5 V1072.5" stroke="#fff" stroke-width="1.3"/>
<path d="M1779.5 1064 H1782.5 L1786.5 1059.5 V1073 L1782.5 1069 H1779.5 Z" fill="#f4f4f4" stroke="#0a1a30" stroke-width="0.6"/>
<circle cx="1788.5" cy="1066.2" r="0.8" fill="#e0e8f0"/>
<path d="M1789.8 1063.2 Q1791.6 1066.2 1789.8 1069.2 M1791.8 1061 Q1795 1066.2 1791.8 1071.4" fill="none" stroke="#e0e8f0" stroke-width="1.1"/>
<rect x="1803" y="1059" width="1.6" height="14" fill="#fff"/>
<path d="M1805 1059.8 Q1808 1059 1810.5 1060.5 Q1813.5 1062 1817 1061 Q1816 1064.5 1814 1066 Q1811 1067 1808.5 1066 Q1806.5 1065.5 1805 1066.5 Z" fill="#f4f4f8"/>
</svg>
<div class="t" style="left:1851px;top:1060px;font-size:12px;color:#fff;letter-spacing:-0.4px">14:47</div>
<div class="a" style="left:1906px;top:1051px;width:14px;height:29px;border:1px solid rgba(200,220,255,0.5);border-right:none;background:linear-gradient(rgba(255,255,255,0.12),rgba(255,255,255,0.02))"></div>
<div class="a" style="left:1814px;top:0;width:103px;height:18px;border:1px solid rgba(10,30,60,0.8);border-top:none;border-radius:0 0 5px 5px;box-shadow:inset 0 0 0 1px rgba(200,220,255,0.35);background:linear-gradient(rgba(255,255,255,0.10),rgba(255,255,255,0.06) 50%,rgba(255,255,255,0.02) 51%,rgba(255,255,255,0.12))"></div>
<div class="a" style="left:1842px;top:0;width:1px;height:17px;background:rgba(10,30,60,0.7);box-shadow:1px 0 0 rgba(200,220,255,0.35)"></div>
<div class="a" style="left:1869px;top:0;width:1px;height:17px;background:rgba(10,30,60,0.7);box-shadow:1px 0 0 rgba(200,220,255,0.35)"></div>
<div class="a" style="left:1824px;top:8px;width:10px;height:4px;background:#fff;box-shadow:0 0 1px 1px rgba(20,40,70,0.6)"></div>
<div class="a" style="left:1852px;top:3px;width:8px;height:8px;border:2px solid #fff;border-left:none;border-bottom:none;box-shadow:1px -1px 1px rgba(20,40,70,0.5)"></div>
<div class="a" style="left:1850px;top:5px;width:7px;height:8px;border:2px solid #fff;box-shadow:0 0 1px 1px rgba(20,40,70,0.6)"></div>
<svg class="a" style="left:1886px;top:2px" width="14" height="12"><path d="M3 2.5 L11 10 M11 2.5 L3 10" stroke="rgba(20,40,70,0.6)" stroke-width="4.4"/><path d="M3 2.5 L11 10 M11 2.5 L3 10" stroke="#fff" stroke-width="3"/></svg>
</body></html>
